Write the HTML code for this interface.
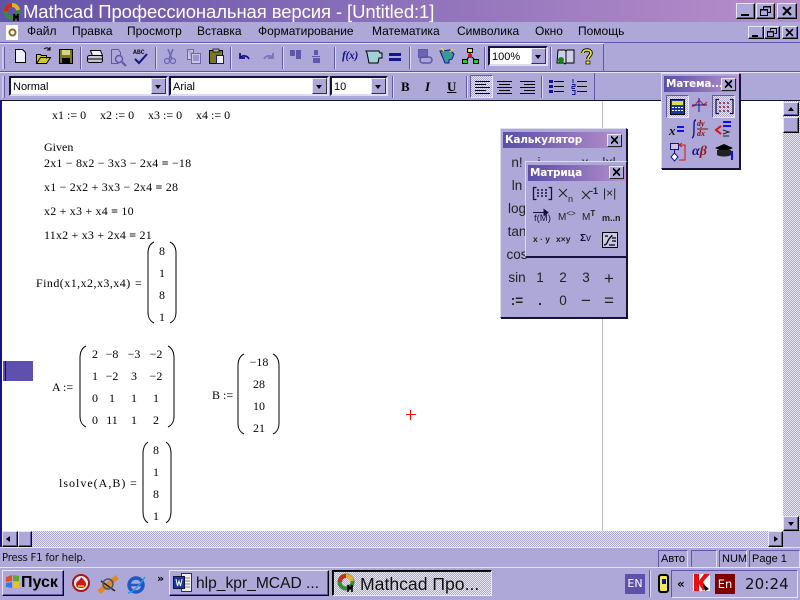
<!DOCTYPE html>
<html><head><meta charset="utf-8"><style>
html,body{margin:0;padding:0;width:800px;height:600px;overflow:hidden;background:#ada8d8}
*{box-sizing:border-box}
.a{position:absolute;white-space:pre;line-height:1}
.s{font-family:"Liberation Sans",sans-serif;font-size:12px;color:#000}
.m{font-family:"Liberation Serif",serif;font-size:12px;color:#000}
.q{letter-spacing:.2px}
.mc{text-align:center;width:24px}
.btn{position:absolute;background:#ada8d8;border:1px solid;border-color:#e8e6f5 #000 #000 #e8e6f5;box-shadow:inset -1px -1px 0 #5f58a8}
.sep{position:absolute;width:2px;background:#5f58a8;border-right:1px solid #dedcf0}
.combo{position:absolute;background:#fff;border:2px solid #14123c;border-right-color:#dedcf0;border-bottom-color:#dedcf0;height:20px;font:11px "Liberation Sans",sans-serif;padding:2px 0 0 2px;line-height:14px}
.combo i{position:absolute;right:0;top:0;width:15px;height:16px;background:#ada8d8;border:1px solid;border-color:#e8e6f5 #333 #333 #e8e6f5}
.combo i:after{content:"";position:absolute;left:3px;top:6px;border:3px solid transparent;border-top:4px solid #000;border-bottom:0}
.panel{position:absolute;background:#ada8d8;border:1px solid;border-color:#dedcf0 #14123c #14123c #dedcf0;box-shadow:1px 1px 0 #14123c}
.pt{position:absolute;background:linear-gradient(90deg,#5a4ea8,#b48fca);color:#fff;font:bold 10.5px "DejaVu Sans",sans-serif;letter-spacing:-.2px;height:16px;line-height:16px;padding-left:2px;overflow:hidden;white-space:nowrap}
.x{position:absolute;width:15px;height:13px;background:#ada8d8;border:1px solid;border-color:#e8e6f5 #222 #222 #e8e6f5}
.x:after{content:"";position:absolute;left:3px;top:1px;width:7px;height:8px;background:linear-gradient(45deg,transparent 42%,#000 42%,#000 58%,transparent 58%),linear-gradient(-45deg,transparent 42%,#000 42%,#000 58%,transparent 58%)}
.ck{font:13.5px "Liberation Sans",sans-serif;color:#222;width:24px;text-align:center}
svg{position:absolute;overflow:visible}
.sb{position:absolute;background-color:#d2d0ea;background-image:repeating-conic-gradient(#ada8d8 0 25%,#e8e6f5 0 50%);background-size:2px 2px}
.fr{position:absolute;border:1px solid #5f58a8;border-right-color:#dedcf0;border-bottom-color:#dedcf0;font:11px/16px "Liberation Sans",sans-serif;height:18px;padding-left:2px}
.ms{font-family:"Liberation Sans",sans-serif;color:#222}
</style></head><body>

<!-- Title bar -->
<div class="a" style="left:0;top:0;width:800px;height:22px;background:linear-gradient(90deg,#6353a8,#b88fcb)"></div>
<svg style="left:3px;top:2px" width="20" height="20" viewBox="0 0 20 20"><circle cx="9" cy="9" r="6.5" fill="none" stroke="#3b8a3a" stroke-width="4"/><path d="M3 9A6 6 0 0 1 9 3" stroke="#d02a20" stroke-width="4" fill="none"/><path d="M9 3A6 6 0 0 1 15 8" stroke="#e2b030" stroke-width="4" fill="none"/><path d="M11 19V12l2 4 2-4v7" stroke="#000" stroke-width="1.6" fill="none"/></svg>
<div class="a" style="left:23px;top:1px;color:#fff;font:18.5px/21px 'Liberation Sans',sans-serif;letter-spacing:-.1px">Mathcad Профессиональная версия - [Untitled:1]</div>
<div class="btn" style="left:736px;top:3px;width:19px;height:16px"></div><div class="a" style="left:741px;top:14px;width:8px;height:2px;background:#000"></div>
<div class="btn" style="left:756px;top:3px;width:19px;height:16px"></div><svg style="left:756px;top:3px" width="19" height="16"><path d="M7.5 3.5h7v6h-3M7.5 3.5v2.5M4.5 6.5h7v6h-7zM4.5 7h7M7.5 4h7" fill="none" stroke="#000"/></svg>
<div class="btn" style="left:777px;top:3px;width:20px;height:16px"></div><svg style="left:777px;top:3px" width="20" height="16"><path d="M6 4l8 8M14 4l-8 8" stroke="#000" stroke-width="2"/></svg>

<!-- Menu -->
<div class="a" style="left:0;top:22px;width:800px;height:21px;background:#ada8d8;border-bottom:1px solid #5f58a8"></div>
<div class="a" style="left:6px;top:25px;width:12px;height:15px;background:#fff"></div>
<svg style="left:8px;top:28px" width="9" height="9"><circle cx="4.5" cy="4.5" r="3" fill="none" stroke="#8a6a20" stroke-width="2"/></svg>
<div class="a s" style="left:27px;top:25px">Файл</div>
<div class="a s" style="left:72px;top:25px">Правка</div>
<div class="a s" style="left:127px;top:25px">Просмотр</div>
<div class="a s" style="left:197px;top:25px">Вставка</div>
<div class="a s" style="left:258px;top:25px">Форматирование</div>
<div class="a s" style="left:372px;top:25px">Математика</div>
<div class="a s" style="left:457px;top:25px">Символика</div>
<div class="a s" style="left:535px;top:25px">Окно</div>
<div class="a s" style="left:578px;top:25px">Помощь</div>
<div class="btn" style="left:748px;top:26px;width:16px;height:13px"></div><div class="a" style="left:752px;top:35px;width:6px;height:2px;background:#000"></div>
<div class="btn" style="left:764px;top:26px;width:16px;height:13px"></div><svg style="left:764px;top:26px" width="16" height="13"><path d="M6.5 2.5h6v5h-2M6.5 2.5v2M3.5 5.5h6v5h-6zM3.5 6h6" fill="none" stroke="#000"/></svg>
<div class="btn" style="left:782px;top:26px;width:16px;height:13px"></div><svg style="left:782px;top:26px" width="16" height="13"><path d="M4 3l7 7M11 3l-7 7" stroke="#000" stroke-width="1.6"/></svg>

<!-- Toolbar band lines -->
<div class="a" style="left:0;top:43px;width:604px;height:1px;background:#e8e6f5"></div>
<div class="a" style="left:0;top:71px;width:800px;height:1px;background:#5f58a8"></div>
<div class="a" style="left:0;top:72px;width:800px;height:1px;background:#e8e6f5"></div>
<div class="a" style="left:603px;top:44px;width:1px;height:28px;background:#5f58a8"></div>
<div class="a" style="left:594px;top:73px;width:1px;height:27px;background:#5f58a8"></div>
<div class="a" style="left:2px;top:47px;width:3px;height:22px;background:#c9c6e6;border-right:1px solid #5f58a8"></div>
<div class="a" style="left:2px;top:76px;width:3px;height:22px;background:#c9c6e6;border-right:1px solid #5f58a8"></div>

<!-- Toolbar 1 icons -->
<svg style="left:0;top:44px" width="604" height="28">
<path d="M15.5 5.5h7l3 3v10h-10z" fill="#efeef9" stroke="#000"/>
<path d="M36.5 19.5v-9h4l1 1h5v3M36.5 19.5l4-6h10l-4 6z" fill="#cfc838" stroke="#000"/><path d="M44 5c3-2 5-1 6 1M50 3v3h-3" fill="none" stroke="#000"/>
<rect x="59.5" y="5.5" width="13" height="14" fill="#787820" stroke="#000"/><rect x="62" y="6" width="8" height="5" fill="#d8d680"/><rect x="62" y="14" width="8" height="5" fill="#000"/>
<path d="M90.5 6.5h10l2 5h-10z" fill="#efeef9" stroke="#000"/><rect x="87.5" y="11.5" width="15" height="7" rx="2" fill="#c8c6d8" stroke="#000"/><path d="M88 15h14M90 18.5h10" stroke="#000"/><rect x="97" y="13" width="4" height="1" fill="#e4d820"/>
<path d="M111.5 5.5h7l2 3v4M111.5 5.5v14h7" fill="none" stroke="#5f58a8"/><circle cx="119" cy="15" r="3.5" fill="none" stroke="#5f58a8" stroke-width="1.5"/><path d="M122 18l4 4" stroke="#5f58a8" stroke-width="2"/>
<path d="M135 15l4 4 8-9" fill="none" stroke="#14148a" stroke-width="2"/>
<path d="M168 5l4 10M173 5l-4 10" stroke="#6a64b4" stroke-width="1.5"/><circle cx="167" cy="17" r="2.5" fill="none" stroke="#6a64b4" stroke-width="1.2"/><circle cx="173" cy="17" r="2.5" fill="none" stroke="#6a64b4" stroke-width="1.2"/>
<path d="M187.5 5.5h6v4h3.5M191.5 9.5h9v10h-9zM187.5 5.5v10h4M193 12h6M193 14h6M193 16h6" fill="#c9c6e6" stroke="#6a64b4"/>
<rect x="209.5" y="6.5" width="13" height="13" fill="#787820" stroke="#000"/><rect x="213" y="5" width="6" height="3" fill="#aaa" stroke="#000" stroke-width=".7"/><rect x="216.5" y="11.5" width="7" height="8" fill="#efeef9" stroke="#14148a"/>
<path d="M240 14c2-3 7-3 9 1M240 9v5h5" fill="none" stroke="#14148a" stroke-width="1.8"/>
<path d="M273 14c-2-3-7-3-9 1M273 9v5h-5" fill="none" stroke="#7a74be" stroke-width="1.8"/>
<rect x="290" y="6" width="5" height="6" fill="#5f58a8"/><rect x="296" y="6" width="5" height="9" fill="#5f58a8"/>
<rect x="314" y="6" width="4" height="5" fill="#5f58a8"/><rect x="312" y="12" width="8" height="1" fill="#5f58a8"/><rect x="313" y="14" width="7" height="5" fill="#5f58a8"/>
<path d="M366 7h13l1 2h2v5h-3l-1 5h-9l-2-10z" fill="#a0d0d8" stroke="#000"/>
<rect x="389" y="9" width="12" height="3" fill="#14148a"/><rect x="389" y="14" width="12" height="3" fill="#14148a"/>
<rect x="418.5" y="5.5" width="9" height="8" fill="#6a64b4" stroke="#5f58a8"/><rect x="420" y="13" width="12" height="6" rx="3" fill="none" stroke="#5f58a8" stroke-width="1.5"/>
<path d="M440 7l10-1 4 4-2 5-3 1v3h-4l-2-5z" fill="#3a9a98" stroke="#14148a"/><path d="M441 4l3 3M453 5l-3 3" stroke="#e4d820" stroke-width="1.5"/>
<rect x="467.5" y="4.5" width="5" height="4" fill="#e6e040" stroke="#000"/><rect x="468" y="10" width="4" height="4" fill="#c81818"/><rect x="462.5" y="15.5" width="5" height="4" fill="#30c840" stroke="#000"/><rect x="473.5" y="15.5" width="5" height="4" fill="#30c840" stroke="#000"/><path d="M470 8v2M466 16l3-3M475 16l-3-3" stroke="#000"/>
<path d="M558 6h7l1 1 1-1h7v13h-8l-1 1-1-1h-7z" fill="#d0cee8" stroke="#000"/><path d="M566 7v12" stroke="#000"/><circle cx="561" cy="16" r="3" fill="#108810"/>
<path d="M583 9c0-4 8-4 8 0 0 3-3 3-3 6" fill="none" stroke="#000" stroke-width="3.5"/><path d="M583 9c0-4 8-4 8 0 0 3-3 3-3 6" fill="none" stroke="#f0e820" stroke-width="1.8"/><rect x="586" y="17" width="4" height="3" fill="#f0e820" stroke="#000" stroke-width=".7"/>
</svg>
<div class="a" style="left:133px;top:49px;font:bold 6.5px 'Liberation Mono',monospace;color:#111">ABC</div>
<div class="a" style="left:342px;top:50px;font:italic bold 11.5px 'Liberation Serif',serif;color:#14148a;letter-spacing:-.3px">f(x)</div>
<div class="sep" style="left:80px;top:47px;height:22px"></div>
<div class="sep" style="left:155px;top:47px;height:22px"></div>
<div class="sep" style="left:230px;top:47px;height:22px"></div>
<div class="sep" style="left:282px;top:47px;height:22px"></div>
<div class="sep" style="left:334px;top:47px;height:22px"></div>
<div class="sep" style="left:409px;top:47px;height:22px"></div>
<div class="sep" style="left:484px;top:47px;height:22px"></div>
<div class="sep" style="left:550px;top:47px;height:22px"></div>
<div class="combo" style="left:488px;top:46px;width:60px;">100%<i></i></div>

<!-- Toolbar 2 -->
<div class="combo" style="left:9px;top:76px;width:159px;">Normal<i></i></div>
<div class="combo" style="left:169px;top:76px;width:160px;">Arial<i></i></div>
<div class="combo" style="left:330px;top:76px;width:58px;">10<i></i></div>
<div class="sep" style="left:392px;top:76px;height:22px"></div>
<div class="a" style="left:401px;top:79px;font:bold 13px 'Liberation Serif',serif">B</div>
<div class="a" style="left:425px;top:79px;font:italic bold 13px 'Liberation Serif',serif">I</div>
<div class="a" style="left:447px;top:79px;font:bold 13px 'Liberation Serif',serif;text-decoration:underline">U</div>
<div class="sep" style="left:466px;top:76px;height:22px"></div>
<div class="sb" style="left:470px;top:75px;width:23px;height:23px;border:1px solid;border-color:#5f58a8 #e8e6f5 #e8e6f5 #5f58a8"></div>
<svg style="left:470px;top:75px" width="130" height="23"><path d="M5 6.5h15M5 9.5h11M5 12.5h15M5 15.5h11M5 18.5h15M27 6.5h15M29 9.5h11M27 12.5h15M29 15.5h11M27 18.5h15M50 6.5h15M54 9.5h11M50 12.5h15M54 15.5h11M50 18.5h15" stroke="#000"/>
<path d="M84 6.5h10M84 11.5h10M84 16.5h10M107 6.5h10M107 11.5h10M107 16.5h10" stroke="#000"/><rect x="79" y="5" width="4" height="3" fill="#14148a"/><rect x="79" y="10" width="4" height="3" fill="#14148a"/><rect x="79" y="15" width="4" height="3" fill="#14148a"/><path d="M103 4v4M102 9.5h3v2h-3v2h3M102 15.5h3v4h-3" stroke="#14148a" fill="none"/></svg>
<div class="sep" style="left:541px;top:76px;height:22px"></div>

<!-- Document -->
<div class="a" style="left:0;top:100px;width:800px;height:1px;background:#14123c"></div>
<div class="a" style="left:0;top:101px;width:2px;height:447px;background:#14148a"></div>
<div class="a" style="left:2px;top:101px;width:781px;height:430px;background:#fff"></div>
<div class="a" style="left:602px;top:101px;width:1px;height:430px;background:#bbb"></div>

<div class="a m" style="left:52px;top:109px">x1 := 0</div>
<div class="a m" style="left:100px;top:109px">x2 := 0</div>
<div class="a m" style="left:148px;top:109px">x3 := 0</div>
<div class="a m" style="left:196px;top:109px">x4 := 0</div>
<div class="a m" style="left:44px;top:141px">Given</div>
<div class="a m q" style="left:44px;top:157px">2x1 − 8x2 − 3x3 − 2x4 <b>=</b> −18</div>
<div class="a m q" style="left:44px;top:181px">x1 − 2x2 + 3x3 − 2x4 <b>=</b> 28</div>
<div class="a m q" style="left:44px;top:205px">x2 + x3 + x4 <b>=</b> 10</div>
<div class="a m q" style="left:44px;top:229px">11x2 + x3 + 2x4 <b>=</b> 21</div>
<div class="a m" style="left:36px;top:277px;letter-spacing:.45px">Find(x1,x2,x3,x4)</div>
<div class="a m" style="left:135px;top:277px">=</div>

<svg style="left:0;top:0" width="800" height="600">
<g fill="none" stroke="#000" stroke-width="1">
<path d="M154 242C150 244 148 248 148 253V312C148 318 150 321 154 323M170 242C174 244 176 248 176 253V312C176 318 174 321 170 323"/>
<path d="M86 346C82 348 80 352 80 358V416C80 422 82 425 86 427M168 346C172 348 174 352 174 358V416C174 422 172 425 168 427"/>
<path d="M244 354C240 356 238 360 238 366V423C238 429 240 432 244 434M273 354C277 356 279 360 279 366V423C279 429 277 432 273 434"/>
<path d="M148 442C145 444 143 448 143 453V512C143 518 145 521 148 523M166 442C169 444 171 448 171 453V512C171 518 169 521 166 523"/>
</g>
<path d="M410.5 410v10M406 414.5h10" stroke="#f01010"/>
</svg>

<div class="a m mc" style="left:150px;top:245px">8</div>
<div class="a m mc" style="left:150px;top:267px">1</div>
<div class="a m mc" style="left:150px;top:289px">8</div>
<div class="a m mc" style="left:150px;top:311px">1</div>

<div class="a m" style="left:52px;top:381px">A :=</div>
<div class="a m mc" style="left:83px;top:348px">2</div><div class="a m mc" style="left:100px;top:348px">−8</div><div class="a m mc" style="left:122px;top:348px">−3</div><div class="a m mc" style="left:144px;top:348px">−2</div>
<div class="a m mc" style="left:83px;top:370px">1</div><div class="a m mc" style="left:100px;top:370px">−2</div><div class="a m mc" style="left:122px;top:370px">3</div><div class="a m mc" style="left:144px;top:370px">−2</div>
<div class="a m mc" style="left:83px;top:392px">0</div><div class="a m mc" style="left:100px;top:392px">1</div><div class="a m mc" style="left:122px;top:392px">1</div><div class="a m mc" style="left:144px;top:392px">1</div>
<div class="a m mc" style="left:83px;top:414px">0</div><div class="a m mc" style="left:100px;top:414px">11</div><div class="a m mc" style="left:122px;top:414px">1</div><div class="a m mc" style="left:144px;top:414px">2</div>

<div class="a m" style="left:212px;top:389px">B :=</div>
<div class="a m mc" style="left:247px;top:356px">−18</div>
<div class="a m mc" style="left:247px;top:378px">28</div>
<div class="a m mc" style="left:247px;top:400px">10</div>
<div class="a m mc" style="left:247px;top:422px">21</div>

<div class="a m" style="left:59px;top:477px;letter-spacing:1px">lsolve(A,B)</div>
<div class="a m" style="left:130px;top:477px">=</div>
<div class="a m mc" style="left:144px;top:444px">8</div>
<div class="a m mc" style="left:144px;top:466px">1</div>
<div class="a m mc" style="left:144px;top:488px">8</div>
<div class="a m mc" style="left:144px;top:510px">1</div>

<div class="a" style="left:3px;top:361px;width:30px;height:20px;background:#5f50b0"></div>
<div class="a" style="left:5px;top:361px;width:1px;height:20px;background:#14123c"></div>

<!-- Scrollbars -->
<div class="sb" style="left:783px;top:101px;width:17px;height:430px"></div>
<div class="btn" style="left:783px;top:102px;width:16px;height:14px"></div><div class="a" style="left:788px;top:107px;border:3px solid transparent;border-bottom:4px solid #000;border-top:0"></div>
<div class="btn" style="left:783px;top:117px;width:16px;height:16px"></div>
<div class="btn" style="left:783px;top:516px;width:16px;height:15px"></div><div class="a" style="left:788px;top:522px;border:3px solid transparent;border-top:4px solid #000;border-bottom:0"></div>
<div class="sb" style="left:2px;top:531px;width:781px;height:16px"></div>
<div class="btn" style="left:2px;top:531px;width:16px;height:16px"></div><div class="a" style="left:6px;top:536px;border:3px solid transparent;border-right:4px solid #000;border-left:0"></div>
<div class="btn" style="left:18px;top:531px;width:14px;height:16px"></div>
<div class="btn" style="left:768px;top:531px;width:15px;height:16px"></div><div class="a" style="left:774px;top:536px;border:3px solid transparent;border-left:4px solid #000;border-right:0"></div>
<div class="a" style="left:0;top:547px;width:800px;height:1px;background:#e8e6f5"></div>

<!-- Status bar -->
<div class="a" style="left:2px;top:553px;font:10.2px 'DejaVu Sans',sans-serif;letter-spacing:-.25px;color:#111">Press F1 for help.</div>
<div class="fr" style="left:658px;top:550px;width:30px">Авто</div>
<div class="fr" style="left:691px;top:550px;width:26px"></div>
<div class="fr" style="left:719px;top:550px;width:28px">NUM</div>
<div class="fr" style="left:749px;top:550px;width:51px">Page 1</div>

<!-- Taskbar -->
<div class="a" style="left:0;top:567px;width:800px;height:1px;background:#e8e6f5"></div>
<div class="btn" style="left:2px;top:570px;width:62px;height:26px"></div>
<svg style="left:5px;top:574px" width="16" height="16"><path d="M1 3l6-2v6l-6 1z" fill="#e05028"/><path d="M8 1l6 1v5l-6 0z" fill="#60a830"/><path d="M1 9l6-1v6l-6-1z" fill="#3878d8"/><path d="M8 8h6v6l-6 0z" fill="#f0c020"/></svg>
<div class="a" style="left:21px;top:574px;font:bold 16px 'Liberation Sans',sans-serif">Пуск</div>
<svg style="left:71px;top:573px" width="80" height="22"><circle cx="10" cy="10" r="8" fill="#f3e8e8" stroke="#a01818" stroke-width="2"/><path d="M5 11c1-4 4-3 5-7 3 3 5 5 5 7 0 3-2 4-5 4s-5-1-5-4z" fill="#c81818"/><path d="M7 12h6v2H7z" fill="#f0a020"/>
<path d="M28 19l18-15" stroke="#e08820" stroke-width="5"/><path d="M30 8l14 10" stroke="#222" stroke-width="1.5"/><circle cx="37" cy="11" r="5" fill="none" stroke="#555" stroke-width="1.5"/>
<circle cx="65" cy="12" r="7" fill="none" stroke="#2058c8" stroke-width="3.5"/><path d="M59 12h12" stroke="#2058c8" stroke-width="2.5"/><path d="M57 20c4 0 12-8 17-16" fill="none" stroke="#2898e0" stroke-width="1.5"/></svg>
<div class="a" style="left:157px;top:572px;font:bold 11px 'DejaVu Sans',sans-serif">»</div>
<div class="btn" style="left:169px;top:570px;width:160px;height:26px"></div>
<svg style="left:173px;top:573px" width="20" height="20"><rect x="8.5" y=".5" width="10" height="18" fill="#eee" stroke="#333"/><path d="M11 5h6M11 8h6M11 11h6M11 14h6" stroke="#888"/><rect x=".5" y="3.5" width="11" height="12" fill="#1838a0" stroke="#14123c"/><path d="M3 6l1.5 7 1.5-5 1.5 5L9 6" stroke="#fff" fill="none"/></svg>
<div class="a" style="left:196px;top:575px;font:15.6px 'Liberation Sans',sans-serif;color:#111">hlp_kpr_MCAD ...</div>
<div class="a sb" style="left:332px;top:570px;width:160px;height:26px;border:1px solid;border-color:#000 #e8e6f5 #e8e6f5 #000;box-shadow:inset 1px 1px 0 #14123c"></div>
<svg style="left:337px;top:573px" width="20" height="20"><circle cx="9" cy="9" r="6.5" fill="none" stroke="#3b8a3a" stroke-width="4"/><path d="M3 9A6 6 0 0 1 9 3" stroke="#d02a20" stroke-width="4" fill="none"/><path d="M9 3A6 6 0 0 1 15 8" stroke="#e2b030" stroke-width="4" fill="none"/><path d="M11 19V12l2 4 2-4v7" stroke="#000" stroke-width="1.6" fill="none"/></svg>
<div class="a" style="left:360px;top:574px;font:17.6px 'Liberation Sans',sans-serif;color:#111">Mathcad Про...</div>
<div class="a" style="left:625px;top:574px;width:20px;height:20px;background:#5f50b0;color:#fff;font:11px/20px 'DejaVu Sans',sans-serif;text-align:center">EN</div>
<div class="sep" style="left:649px;top:570px;height:27px"></div>
<svg style="left:658px;top:574px" width="12" height="20"><rect x="1" y="1" width="9" height="17" rx="2" fill="#f0e860" stroke="#000" stroke-width="2"/><rect x="4" y="5" width="4" height="5" fill="#14148a"/></svg>
<div class="a" style="left:671px;top:570px;width:127px;height:28px;border:1px solid #5f58a8;border-right-color:#e8e6f5;border-bottom-color:#e8e6f5"></div>
<div class="a" style="left:677px;top:577px;font:bold 12px 'DejaVu Sans',sans-serif">«</div>
<svg style="left:693px;top:574px" width="18" height="18"><rect width="17" height="17" fill="#fff"/><path d="M1 0h5v7l5-7h6l-7 8 3 5-3 4L6 10v7H1z" fill="#e81010"/><path d="M10 10l6 5-4 2z" fill="#000"/></svg>
<div class="a" style="left:715px;top:574px;width:20px;height:20px;background:#800000;color:#fff;font:11.5px/20px 'DejaVu Sans',sans-serif;text-align:center">En</div>
<div class="a" style="left:745px;top:575px;font:15px 'DejaVu Sans',sans-serif;letter-spacing:.1px;color:#111">20:24</div>

<!-- Math panel -->
<div class="panel" style="left:661px;top:73px;width:79px;height:96px"></div>
<div class="pt" style="left:664px;top:76px;width:73px">Матема...</div>
<div class="x" style="left:721px;top:78px"></div>
<div class="sb" style="left:666px;top:95px;width:23px;height:23px;border:1px solid;border-color:#5f58a8 #e8e6f5 #e8e6f5 #5f58a8"></div>
<div class="sb" style="left:712px;top:95px;width:23px;height:23px;border:1px solid;border-color:#5f58a8 #e8e6f5 #e8e6f5 #5f58a8"></div>
<svg style="left:661px;top:73px" width="79" height="96">
<rect x="9.5" y="26.5" width="14" height="15" fill="#1838a0" stroke="#000"/><rect x="11" y="28" width="11" height="4" fill="#d8e050"/><path d="M11 34.5h11M11 37.5h11" stroke="#fff" stroke-dasharray="2 1"/>
<path d="M31 33c4 2 5-7 8-5s2 6 7 1" fill="none" stroke="#e01010"/><path d="M38 25v14M31 32h15" stroke="#14148a"/>
<path d="M58 26.5h-3v14h3M69 26.5h3v14h-3" fill="none" stroke="#14123c" stroke-width="1.3"/><path d="M58 30h2M62 30h2M66 30h2M58 34h2M62 34h2M66 34h2M58 38h2M62 38h2M66 38h2" stroke="#901818" stroke-width="1.5"/>
<rect x="16" y="53" width="7" height="2" fill="#1010e0"/><rect x="16" y="57" width="7" height="2" fill="#1010e0"/>
<path d="M35 47c-2 0-2 3-2 8s0 9-2 10" fill="none" stroke="#14148a" stroke-width="1.4"/><path d="M36 56h11" stroke="#801010"/>
<path d="M60 53l-5 4 5 4" fill="none" stroke="#e01010" stroke-width="2"/><path d="M62 49h8M62 53h8" stroke="#1010e0" stroke-width="2"/><path d="M62 57l6 2-6 2M62 63h6" fill="none" stroke="#222"/>
<rect x="9.5" y="70.5" width="8" height="6" fill="#c9c6e6" stroke="#14148a"/><path d="M13.5 77v3" stroke="#14148a"/><path d="M13.5 80l3.5 4-3.5 4-3.5-4z" fill="#fff" stroke="#14148a"/><path d="M19 72h5v15h-6M21 70l-3 2 3 2" fill="none" stroke="#e01010"/>
<path d="M54 75l9-4 9 4-9 4z" fill="#000"/><path d="M56 77v5c2 2 12 2 14 0v-5" fill="#222"/><path d="M71 78v9" stroke="#1010e0" stroke-width="2"/>
</svg>
<div class="a" style="left:669px;top:123px;font:italic bold 13px 'Liberation Serif',serif;color:#111">x</div>
<div class="a" style="left:697px;top:120px;font:italic bold 8px/8px 'Liberation Serif',serif;color:#801010">dy</div>
<div class="a" style="left:697px;top:130px;font:italic bold 8px/8px 'Liberation Serif',serif;color:#801010">dx</div>
<div class="a" style="left:692px;top:144px;font:italic bold 14px 'Liberation Serif',serif;color:#14148a">α<span style="color:#901818">β</span></div>

<!-- Calculator panel -->
<div class="panel" style="left:500px;top:128px;width:127px;height:190px"></div>
<div class="pt" style="left:503px;top:132px;width:119px">Калькулятор</div>
<div class="x" style="left:607px;top:134px"></div>
<div class="a ck" style="left:505px;top:155px">n!</div>
<div class="a ck" style="left:527px;top:155px">i</div>
<div class="a ck" style="left:573px;top:155px">x</div>
<div class="a ck" style="left:597px;top:155px">|x|</div>
<div class="a ck" style="left:505px;top:178px">ln</div>
<div class="a ck" style="left:505px;top:201px">log</div>
<div class="a ck" style="left:505px;top:224px">tan</div>
<div class="a ck" style="left:505px;top:247px">cos</div>
<div class="a ck" style="left:505px;top:270px">sin</div>
<div class="a ck" style="left:528px;top:270px">1</div>
<div class="a ck" style="left:551px;top:270px">2</div>
<div class="a ck" style="left:574px;top:270px">3</div>
<div class="a ck" style="left:597px;top:269px;font-size:17px">+</div>
<div class="a ck" style="left:505px;top:293px;font-weight:bold">:=</div>
<div class="a ck" style="left:528px;top:293px;font-weight:bold">.</div>
<div class="a ck" style="left:551px;top:293px">0</div>
<div class="a ck" style="left:574px;top:291px;font-size:17px">−</div>
<div class="a ck" style="left:597px;top:291px;font-size:17px">=</div>

<!-- Matrix panel -->
<div class="panel" style="left:525px;top:161px;width:102px;height:96px"></div>
<div class="pt" style="left:528px;top:165px;width:97px">Матрица</div>
<div class="x" style="left:609px;top:166px"></div>
<svg style="left:525px;top:160px" width="105" height="100" viewBox="0 0 105 100">
<path d="M11.5 27.5h-3v12h3M23.5 27.5h3v12h-3" fill="none" stroke="#14123c" stroke-width="1.3"/><path d="M12 30h2M16 30h2M20 30h2M12 33h2M16 33h2M20 33h2M12 36h2M16 36h2M20 36h2" stroke="#14123c" stroke-width="1.5"/>
<path d="M34 29l8 8M42 29l-8 8" stroke="#222"/>
<path d="M57 31l8 8M65 31l-8 8" stroke="#222"/>
<path d="M8 52.5h15M23 52.5l-4-3v6z" stroke="#14123c" fill="#14123c"/>
</svg>
<div class="a ms" style="left:568px;top:195px;font-size:9px">n</div>
<div class="a ms" style="left:590px;top:187px;font-size:9px;font-weight:bold">-1</div>
<div class="a ms" style="left:603px;top:187px;font-size:12px">|×|</div>
<div class="a ms" style="left:534px;top:214px;font-size:9.5px;color:#14123c">f(M)</div>
<div class="a ms" style="left:558px;top:213px;font-size:10px">M<span style="font-size:8px;position:relative;top:-4px">&lt;&gt;</span></div>
<div class="a ms" style="left:582px;top:213px;font-size:10px">M<span style="font-size:8px;position:relative;top:-4px;font-weight:bold">T</span></div>
<div class="a ms" style="left:602px;top:214px;font-size:9px;font-weight:bold">m..n</div>
<div class="a ms" style="left:533px;top:235px;font-size:8.5px;font-weight:bold">x · y</div>
<div class="a ms" style="left:556px;top:235px;font-size:8.5px;font-weight:bold">x×y</div>
<div class="a ms" style="left:580px;top:234px;font-size:10px;font-weight:bold;color:#14123c">Σ<span style="font-weight:normal">v</span></div>
<svg style="left:602px;top:232px" width="18" height="17"><rect x=".5" y=".5" width="15" height="15" fill="#c9c6e6" stroke="#000"/><path d="M2 13c3 0 3-3 5-6s3-2 3-4M7 13h6M10 9h4M10 6h4M3 4h3" fill="none" stroke="#000" stroke-width="1.3"/></svg>

</body></html>
